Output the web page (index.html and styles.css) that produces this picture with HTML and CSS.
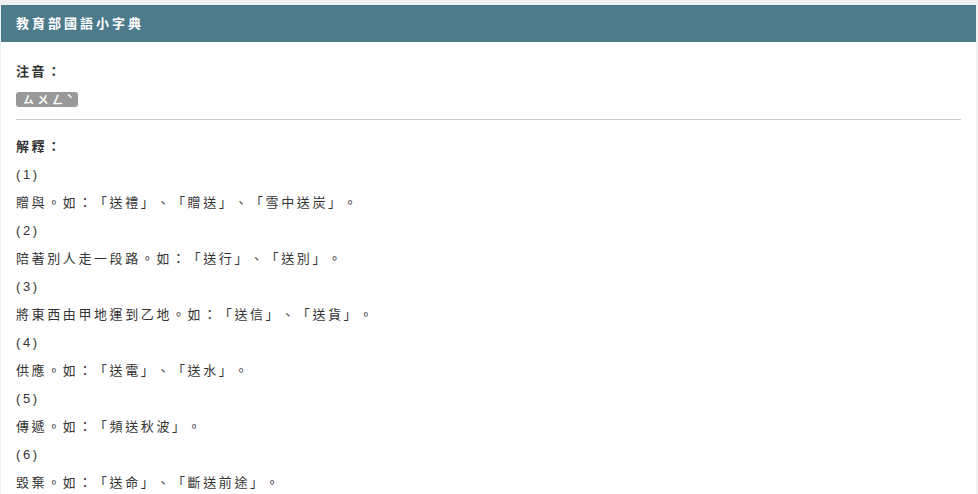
FILE: index.html
```html
<!DOCTYPE html>
<html lang="zh-Hant-TW">
<head>
	<meta charset="utf-8">
	<title>教育部國語小字典</title>
	<link rel="stylesheet" href="styles.css">
</head>
<body>
	<main class="card">
		<header class="card-head">教育部國語小字典</header>
		<article class="card-body">
			<div class="label">注音：</div>
			<div class="zhuyin"><span class="badge">ㄙㄨㄥˋ</span></div>
			<hr class="rule">
			<div class="label">解釋：</div>
			<div class="line">(1)</div>
			<div class="line">贈與。如：「送禮」、「贈送」、「雪中送炭」。</div>
			<div class="line">(2)</div>
			<div class="line">陪著別人走一段路。如：「送行」、「送別」。</div>
			<div class="line">(3)</div>
			<div class="line">將東西由甲地運到乙地。如：「送信」、「送貨」。</div>
			<div class="line">(4)</div>
			<div class="line">供應。如：「送電」、「送水」。</div>
			<div class="line">(5)</div>
			<div class="line">傳遞。如：「頻送秋波」。</div>
			<div class="line">(6)</div>
			<div class="line">毀棄。如：「送命」、「斷送前途」。</div>
		</article>
	</main>
</body>
</html>
```

FILE: styles.css
```css
*{
	margin: 0px;
	padding: 0px;
	box-sizing: border-box;
}
html, body{
	background-color: #f0f0f0;
	overflow: hidden;
}
body{
	font-family: "Liberation Sans", "Noto Sans CJK TC", sans-serif;
	font-size: 13px;
	letter-spacing: 0.2em;
	text-spacing-trim: space-all;
	color: #333;
}
.card{
	margin: 5px 2px 0 1px;
	background-color: #fff;
	min-height: 489px;
}
.card-head{
	height: 37px;
	line-height: 37px;
	padding: 0 15px;
	background-color: #4d7b8b;
	color: #fff;
	font-weight: bold;
	letter-spacing: 3px;
}
.card-body{
	padding: 16px 15px 0 15px;
}
.label{
	line-height: 28px;
	font-weight: bold;
}
.zhuyin{
	margin-top: 6px;
	height: 15px;
}
.badge{
	display: inline-block;
	height: 15px;
	line-height: 15px;
	padding: 0 1px 0 7px;
	background-color: #999;
	color: #fff;
	font-family: "Noto Sans CJK TC", sans-serif;
	font-size: 11px;
	font-weight: bold;
	letter-spacing: 3.5px;
	border-radius: 3px;
	vertical-align: top;
	white-space: nowrap;
}
.rule{
	border: none;
	border-top: 1px solid #ccc;
	margin: 12px 0 13px 0;
}
.line{
	line-height: 28px;
}
```
